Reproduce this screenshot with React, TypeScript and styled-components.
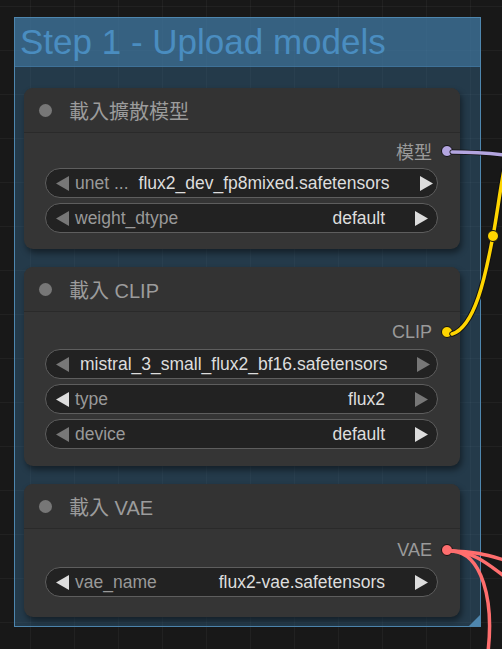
import React from "react";
import styled, {createGlobalStyle} from "styled-components";

const GlobalStyle = createGlobalStyle`
  html, body {
    margin: 0;
    padding: 0;
    background-color: #181818;
  }
  body {
    font-family: "Liberation Sans", Arial, "Noto Sans CJK TC", sans-serif;
  }
`;

const Canvas = styled.div`
  position: relative;
  width: 502px;
  height: 649px;
  overflow: hidden;
  background-color: #181818;
  background-image:
    linear-gradient(to right, rgba(255, 255, 255, 0.04) 1px, transparent 1px),
    linear-gradient(to bottom, rgba(255, 255, 255, 0.04) 1px, transparent 1px);
  background-size: 44px 44px;
  background-position: 30px 6px;
  padding: 17px 0 0 14px;
  box-sizing: border-box;
`;

const Group = styled.div`
  position: relative;
  width: 467px;
  height: 610px;
  box-sizing: border-box;
  border: 1px solid #4e86ae;
  background: rgba(56, 110, 150, 0.4);
  display: flex;
  flex-direction: column;
`;

const GroupTitle = styled.div`
  height: 48px;
  flex-shrink: 0;
  background: rgba(70, 130, 175, 0.55);
  color: #4a8dc0;
  font-size: 35px;
  line-height: 48px;
  padding-left: 5px;
  border-bottom: 1px solid rgba(70, 130, 175, 0.5);
  white-space: nowrap;
`;

const GroupBody = styled.div`
  display: flex;
  flex-direction: column;
  gap: 18px;
  padding: 21px 0 0 9px;
`;

const ResizeHandle = styled.div`
  position: absolute;
  right: 0;
  bottom: 0;
  width: 0;
  height: 0;
  border-left: 11px solid transparent;
  border-bottom: 11px solid #4e86ae;
`;

const Node = styled.div`
  width: 436px;
  border-radius: 9px;
  background: #353535;
  box-shadow: 2px 4px 6px rgba(0, 0, 0, 0.45);
  overflow: hidden;
`;

const NodeHeader = styled.div`
  height: 44px;
  display: flex;
  align-items: center;
  gap: 17px;
  padding-left: 15px;
  background: #333333;
  border-bottom: 1px solid #2a2a2a;
  color: #9c9c9c;
  font-size: 20px;
`;

const StatusDot = styled.span`
  width: 13px;
  height: 13px;
  border-radius: 50%;
  background: #777777;
`;

const NodeBody = styled.div<{$top: number; $bottom: number}>`
  display: flex;
  flex-direction: column;
  gap: 5px;
  padding: ${p => p.$top}px 22px ${p => p.$bottom}px 21px;
`;

const OutputRow = styled.div`
  height: 20px;
  display: flex;
  align-items: center;
  justify-content: flex-end;
  gap: 9px;
  margin-right: -15px;
  margin-bottom: 2px;
  color: #9a9a9a;
  font-size: 18px;
`;

const Slot = styled.span<{$color: string}>`
  width: 10px;
  height: 10px;
  border-radius: 50%;
  background: ${p => p.$color};
  border: 1px solid #111;
`;

const Widget = styled.div`
  height: 30px;
  box-sizing: border-box;
  border: 1px solid #5e5e5e;
  border-radius: 15px;
  background: #222222;
  display: flex;
  align-items: center;
  padding: 0 8px 0 9px;
  font-size: 17.5px;
`;

const Label = styled.span`
  color: #999999;
  margin-left: 5px;
  white-space: nowrap;
`;

const Value = styled.span<{$align: "left" | "right"}>`
  flex: 1;
  color: #dddddd;
  text-align: ${p => p.$align};
  margin: 0 29px 0 10px;
  white-space: nowrap;
`;

const Arrow = styled.svg<{$on: boolean}>`
  flex-shrink: 0;
  fill: ${p => (p.$on ? "#dddddd" : "#777777")};
`;

const Wires = styled.svg`
  position: absolute;
  left: 0;
  top: 0;
  pointer-events: none;
`;

function LeftArrow({on}: {on: boolean}) {
  return <Arrow $on={on} width="15" height="15" viewBox="0 0 15 15"><polygon points="14,0 14,15 1,7.5"/></Arrow>;
}

function RightArrow({on}: {on: boolean}) {
  return <Arrow $on={on} width="15" height="15" viewBox="0 0 15 15"><polygon points="1,0 1,15 14,7.5"/></Arrow>;
}

type ComboProps = {
  label?: string;
  value: string;
  left?: boolean;
  right?: boolean;
};

function Combo({label, value, left = false, right = true}: ComboProps) {
  return (
    <Widget>
      <LeftArrow on={left}/>
      {label && <Label>{label}</Label>}
      <Value $align={label ? "right" : "left"}>{value}</Value>
      <RightArrow on={right}/>
    </Widget>
  );
}

type LoaderProps = {
  title: string;
  output: string;
  color: string;
  top: number;
  bottom: number;
  children: React.ReactNode;
};

function Loader({title, output, color, top, bottom, children}: LoaderProps) {
  return (
    <Node>
      <NodeHeader><StatusDot/>{title}</NodeHeader>
      <NodeBody $top={top} $bottom={bottom}>
        <OutputRow>{output}<Slot $color={color}/></OutputRow>
        {children}
      </NodeBody>
    </Node>
  );
}

export default function App() {
  return (
    <>
      <GlobalStyle/>
      <Canvas>
        <Group>
          <GroupTitle>Step 1 - Upload models</GroupTitle>
          <GroupBody>
            <Loader title="載入擴散模型" output="模型" color="#b3a5e0" top={8} bottom={16}>
              <Combo label="unet ..." value="flux2_dev_fp8mixed.safetensors"/>
              <Combo label="weight_dtype" value="default"/>
            </Loader>
            <Loader title="載入 CLIP" output="CLIP" color="#ffd500" top={10} bottom={17}>
              <Combo value="mistral_3_small_flux2_bf16.safetensors" right={false}/>
              <Combo label="type" value="flux2" left={true} right={false}/>
              <Combo label="device" value="default"/>
            </Loader>
            <Loader title="載入 VAE" output="VAE" color="#ff6e6e" top={11} bottom={20}>
              <Combo label="vae_name" value="flux2-vae.safetensors" left={true}/>
            </Loader>
          </GroupBody>
          <ResizeHandle/>
        </Group>
        <Wires width="502" height="649" viewBox="0 0 502 649">
          <g fill="none" strokeLinecap="round">
            <path d="M452 152 C470 152 488 153 504 155" stroke="#111" strokeWidth="5"/>
            <path d="M452 152 C470 152 488 153 504 155" stroke="#b3a5e0" strokeWidth="3.5"/>
            <path d="M452 334 C478 326 488 260 493 236 C497 215 500 190 504 170" stroke="#111" strokeWidth="5.5"/>
            <path d="M452 334 C478 326 488 260 493 236 C497 215 500 190 504 170" stroke="#ffd500" strokeWidth="3.5"/>
            <path d="M452 551 C475 551 490 556 504 560" stroke="#ff6e6e" strokeWidth="3.5"/>
            <path d="M452 551 C475 552 490 566 504 576" stroke="#ff6e6e" strokeWidth="3.5"/>
            <path d="M452 551 C482 553 494 600 488 652" stroke="#ff6e6e" strokeWidth="3.5"/>
          </g>
          <circle cx="493" cy="236" r="5.5" fill="#ffd500" stroke="#111" strokeWidth="1"/>
        </Wires>
      </Canvas>
    </>
  );
}
